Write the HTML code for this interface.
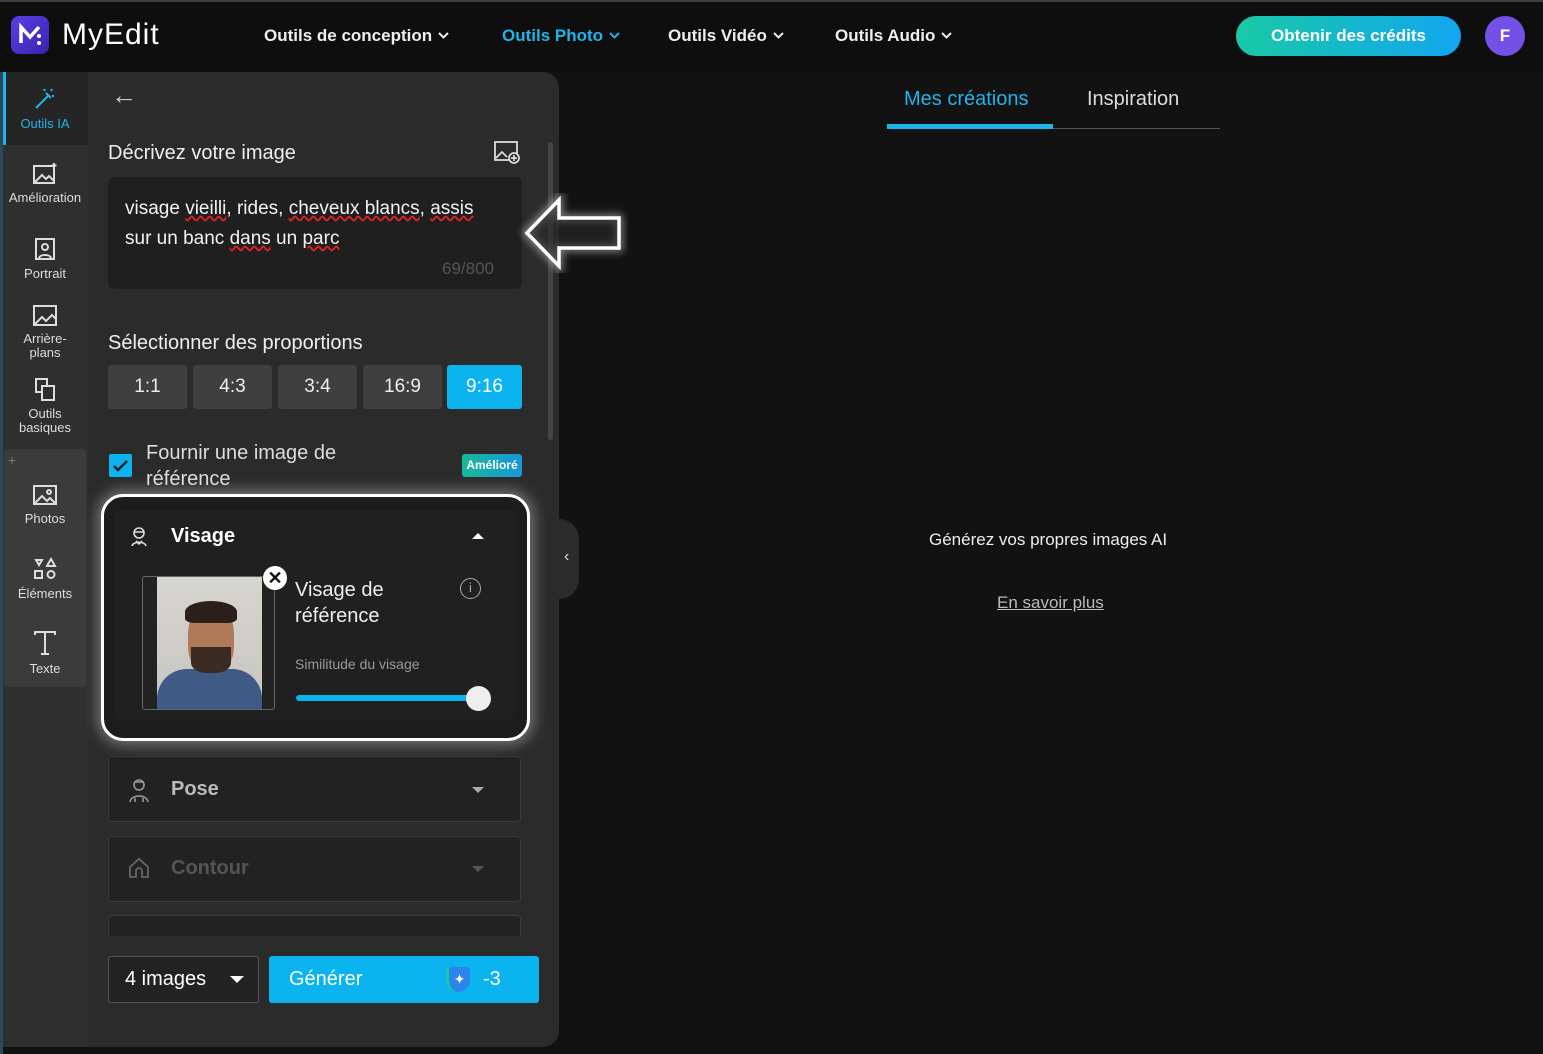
<!DOCTYPE html>
<html><head><meta charset="utf-8">
<style>
*{box-sizing:border-box;margin:0;padding:0}
body{width:1543px;height:1054px;background:#121212;font-family:"Liberation Sans",sans-serif;color:#fff;position:relative;overflow:hidden}
.abs{position:absolute}
.nav{font-size:17px;font-weight:bold;color:#eee;top:26px}
.nav svg{margin-left:6px;vertical-align:2px}
.side{position:absolute;left:2px;width:86px;text-align:center;font-size:13px;color:#ddd}
.side svg{display:block;margin:0 auto 4px}
.btn{position:absolute;top:365px;height:44px;width:79px;background:#3f3f3f;border-radius:3px;font-size:19px;text-align:center;line-height:44px;color:#eee}
.box{position:absolute;left:108px;width:413px;background:#222;border:1px solid #3a3a3a;border-radius:4px}
</style></head><body>
<!-- header -->
<div class="abs" style="left:0;top:0;width:1543px;height:72px;background:#0e0e0e;border-top:2px solid #3a4046"></div>
<div class="abs" style="left:11px;top:16px;width:38px;height:38px;border-radius:8px;background:linear-gradient(135deg,#5a3ee8,#3a22b0)">
<svg width="38" height="38" viewBox="0 0 38 38"><path d="M10 27V11l9 10 9-10" stroke="#fff" stroke-width="3.5" fill="none"/><circle cx="28" cy="20" r="2" fill="#fff"/><circle cx="28" cy="27" r="2" fill="#fff"/></svg></div>
<div class="abs" style="left:62px;top:18px;font-size:30px;color:#fff;letter-spacing:1px">MyEdit</div>
<div class="abs nav" style="left:264px">Outils de conception<svg width="11" height="7"><path d="M1 1l4.5 4.5L10 1" stroke="#eee" stroke-width="2" fill="none"/></svg></div>
<div class="abs nav" style="left:502px;color:#1fb5ea">Outils Photo<svg width="11" height="7"><path d="M1 1l4.5 4.5L10 1" stroke="#1fb5ea" stroke-width="2" fill="none"/></svg></div>
<div class="abs nav" style="left:668px">Outils Vidéo<svg width="11" height="7"><path d="M1 1l4.5 4.5L10 1" stroke="#eee" stroke-width="2" fill="none"/></svg></div>
<div class="abs nav" style="left:835px">Outils Audio<svg width="11" height="7"><path d="M1 1l4.5 4.5L10 1" stroke="#eee" stroke-width="2" fill="none"/></svg></div>
<div class="abs" style="left:1236px;top:16px;width:225px;height:40px;border-radius:20px;background:linear-gradient(90deg,#19c9a6,#12a6f0);font-size:17px;font-weight:bold;text-align:center;line-height:40px">Obtenir des crédits</div>
<div class="abs" style="left:1485px;top:16px;width:40px;height:40px;border-radius:50%;background:#7450e6;text-align:center;line-height:40px;font-size:17px;font-weight:bold">F</div>

<!-- sidebar -->
<div class="abs" style="left:0;top:72px;width:88px;height:975px;background:#2f2f2f"></div>
<div class="abs" style="left:0;top:72px;width:3px;height:982px;background:#2a4a5a"></div>
<div class="abs" style="left:3px;top:72px;width:86px;height:73px;background:#252525"></div>
<div class="abs" style="left:3px;top:72px;width:3px;height:73px;background:#1fb5ea"></div>
<div class="abs" style="left:4px;top:449px;width:82px;height:238px;background:#3b3b3b;border-radius:4px"></div>
<div class="abs" style="left:8px;top:452px;color:#777;font-size:14px">+</div>
<div class="side" style="top:86px;color:#1fb5ea"><svg width="26" height="26" viewBox="0 0 26 26" fill="none" stroke="#1fb5ea" stroke-width="2"><path d="M4 22L17 9M14 7l5 5M12 3l1 2M20 3l-1 2M22 10l-2 0"/></svg>Outils IA</div>
<div class="side" style="top:162px"><svg width="26" height="24" viewBox="0 0 26 24" fill="none" stroke="#ddd" stroke-width="2"><rect x="2" y="4" width="20" height="17"/><path d="M3 20l7-7 4 4 3-3 5 5"/><path d="M22 1v5M19.5 3.5h5"/></svg>Amélioration</div>
<div class="side" style="top:236px"><svg width="24" height="26" viewBox="0 0 24 26" fill="none" stroke="#ddd" stroke-width="2"><rect x="3" y="3" width="18" height="20"/><circle cx="12" cy="11" r="3"/><path d="M6 22c1-4 11-4 12 0"/></svg>Portrait</div>
<div class="side" style="top:304px;line-height:14px"><svg width="26" height="24" viewBox="0 0 26 24" fill="none" stroke="#ddd" stroke-width="2"><rect x="2" y="2" width="22" height="19"/><path d="M3 20l7-7 4 4 6-6 4 4"/></svg>Arrière-<br>plans</div>
<div class="side" style="top:377px;line-height:14px"><svg width="24" height="26" viewBox="0 0 24 26" fill="none" stroke="#ddd" stroke-width="2"><rect x="3" y="2" width="11" height="13"/><rect x="9" y="9" width="12" height="14" fill="#2f2f2f"/></svg>Outils<br>basiques</div>
<div class="side" style="top:483px"><svg width="26" height="24" viewBox="0 0 26 24" fill="none" stroke="#ddd" stroke-width="2"><rect x="2" y="3" width="22" height="18"/><path d="M3 20l7-7 5 5 3-3 5 5"/><circle cx="17" cy="9" r="2"/></svg>Photos</div>
<div class="side" style="top:556px"><svg width="26" height="26" viewBox="0 0 26 26" fill="none" stroke="#ddd" stroke-width="2"><path d="M4 4h6l-3 5z"/><path d="M19 3l4 7h-8z"/><rect x="3" y="15" width="7" height="7"/><circle cx="19" cy="18.5" r="3.5"/></svg>Éléments</div>
<div class="side" style="top:629px"><svg width="26" height="28" viewBox="0 0 26 28" fill="none" stroke="#ddd" stroke-width="2"><path d="M3 6V3h20v3M13 3v22M9 25h8"/></svg>Texte</div>

<!-- panel -->
<div class="abs" style="left:88px;top:72px;width:471px;height:975px;background:#2b2b2b;border-radius:0 16px 16px 0"></div>
<div class="abs" style="left:548px;top:142px;width:5px;height:298px;background:#444;border-radius:3px"></div>
<div class="abs" style="left:111px;top:80px;font-size:26px;color:#ccc">←</div>
<div class="abs" style="left:108px;top:142px;font-size:20px;color:#eee">Décrivez votre image</div>
<svg class="abs" style="left:494px;top:141px" width="28" height="24" viewBox="0 0 28 24" fill="none" stroke="#ddd" stroke-width="1.8"><rect x="1" y="1" width="22" height="18"/><path d="M2 17l6-6 5 5"/><circle cx="20" cy="17" r="5" fill="#2b2b2b"/><path d="M20 14v6M17 17h6"/></svg>
<div class="abs" style="left:108px;top:177px;width:414px;height:112px;background:#1f1f1f;border-radius:6px"></div>
<div class="abs" style="left:125px;top:194px;font-size:19px;line-height:30px;color:#f2f2f2;width:390px">visage <u style="text-decoration:underline wavy #d22">vieilli</u>, rides, <u style="text-decoration:underline wavy #d22">cheveux blancs</u>, <u style="text-decoration:underline wavy #d22">assis</u><br>sur un banc <u style="text-decoration:underline wavy #d22">dans</u> un <u style="text-decoration:underline wavy #d22">parc</u></div>
<div class="abs" style="left:442px;top:259px;font-size:17px;color:#555">69/800</div>
<div class="abs" style="left:108px;top:332px;font-size:20px;color:#eee">Sélectionner des proportions</div>
<div class="btn" style="left:108px">1:1</div>
<div class="btn" style="left:193px">4:3</div>
<div class="btn" style="left:278px">3:4</div>
<div class="btn" style="left:363px">16:9</div>
<div class="btn" style="left:447px;width:75px;background:#0bb4ee;color:#fff">9:16</div>
<div class="abs" style="left:109px;top:454px;width:23px;height:23px;background:#0bb4ee;border-radius:2px"><svg width="23" height="23"><path d="M5 12l4 4 9-9" stroke="#222" stroke-width="2.5" fill="none"/></svg></div>
<div class="abs" style="left:146px;top:440px;font-size:20px;line-height:26px;color:#ddd">Fournir une image de<br>référence</div>
<div class="abs" style="left:462px;top:454px;width:60px;height:23px;border-radius:3px;background:linear-gradient(90deg,#19b89a,#1896d8);font-size:12px;font-weight:bold;text-align:center;line-height:23px">Amélioré</div>

<!-- visage card -->
<div class="abs" style="left:101px;top:494px;width:429px;height:247px;border:3px solid #fff;border-radius:22px;background:#1c1c1c;box-shadow:0 0 14px 4px rgba(255,255,255,.35)"></div>
<div class="abs" style="left:114px;top:510px;width:402px;height:210px;background:#202020;border-radius:6px"></div>
<svg class="abs" style="left:129px;top:525px" width="20" height="22" viewBox="0 0 20 22" fill="none" stroke="#ddd" stroke-width="1.6"><circle cx="10" cy="8" r="5"/><path d="M5 7h10M3 21c1-5 13-5 14 0M7 16l3 3 3-3"/></svg>
<div class="abs" style="left:171px;top:525px;font-size:20px;font-weight:bold">Visage</div>
<div class="abs" style="left:472px;top:533px;width:0;height:0;border-left:6px solid transparent;border-right:6px solid transparent;border-bottom:6px solid #fff"></div>
<div class="abs" style="left:142px;top:576px;width:133px;height:134px;border:1px solid #666;border-radius:3px;background:#222;overflow:hidden">
<div class="abs" style="left:14px;top:0;width:105px;height:134px;background:linear-gradient(#d7d5d0,#c7c5c0)"></div>
<div class="abs" style="left:14px;top:92px;width:105px;height:42px;background:#3f5b85;border-radius:30px 30px 0 0"></div>
<div class="abs" style="left:45px;top:30px;width:46px;height:66px;background:#b07a58;border-radius:40%"></div>
<div class="abs" style="left:42px;top:24px;width:52px;height:22px;background:#2a1f1a;border-radius:50% 50% 20% 20%"></div>
<div class="abs" style="left:48px;top:70px;width:40px;height:26px;background:#3a2a22;border-radius:0 0 40% 40%"></div>
</div>
<div class="abs" style="left:263px;top:566px;width:24px;height:24px;border-radius:50%;background:#fff;color:#111;text-align:center;line-height:24px;font-size:18px;font-weight:bold">✕</div>
<div class="abs" style="left:295px;top:577px;font-size:20px;line-height:26px;color:#eee">Visage de<br>référence</div>
<div class="abs" style="left:460px;top:578px;width:21px;height:21px;border:1.5px solid #aaa;border-radius:50%;color:#aaa;font-size:13px;text-align:center;line-height:18px">i</div>
<div class="abs" style="left:295px;top:656px;font-size:14px;color:#999">Similitude du visage</div>
<div class="abs" style="left:296px;top:695px;width:182px;height:6px;border-radius:3px;background:#0bb4ee"></div>
<div class="abs" style="left:466px;top:686px;width:25px;height:25px;border-radius:50%;background:#eee"></div>

<!-- pose / contour -->
<div class="box" style="top:756px;height:66px"></div>
<svg class="abs" style="left:128px;top:777px" width="22" height="26" viewBox="0 0 22 26" fill="none" stroke="#999" stroke-width="1.6"><circle cx="11" cy="8" r="5"/><path d="M6 5h10M2 25c1-8 17-8 18 0M7 21v4M15 21v4"/></svg>
<div class="abs" style="left:171px;top:778px;font-size:20px;font-weight:bold;color:#bbb">Pose</div>
<div class="abs" style="left:472px;top:787px;border-left:6px solid transparent;border-right:6px solid transparent;border-top:6px solid #aaa"></div>
<div class="box" style="top:836px;height:66px"></div>
<svg class="abs" style="left:128px;top:857px" width="22" height="22" viewBox="0 0 22 22" fill="none" stroke="#666" stroke-width="1.8"><path d="M2 10l9-8 9 8v10H14v-6a3 3 0 0 0-6 0v6H2z"/></svg>
<div class="abs" style="left:171px;top:857px;font-size:20px;font-weight:bold;color:#555">Contour</div>
<div class="abs" style="left:472px;top:866px;border-left:6px solid transparent;border-right:6px solid transparent;border-top:6px solid #555"></div>
<div class="box" style="top:915px;height:30px;border-bottom:none;border-radius:4px 4px 0 0"></div>
<div class="abs" style="left:100px;top:936px;width:440px;height:12px;background:#2b2b2b"></div>

<!-- bottom -->
<div class="abs" style="left:108px;top:956px;width:151px;height:47px;border:1px solid #555;border-radius:3px;background:#222"></div>
<div class="abs" style="left:125px;top:968px;font-size:20px">4 images</div>
<div class="abs" style="left:230px;top:976px;border-left:7px solid transparent;border-right:7px solid transparent;border-top:7px solid #fff"></div>
<div class="abs" style="left:269px;top:956px;width:270px;height:47px;background:#0bb4ee;border-radius:3px"></div>
<div class="abs" style="left:289px;top:968px;font-size:20px">Générer</div>
<div class="abs" style="left:446px;top:967px;width:24px;height:25px;border-radius:4px 4px 12px 12px;background:#2a86e8;border-left:3px solid #19c9a6;color:#fff;text-align:center;font-size:14px;line-height:25px">✦</div>
<div class="abs" style="left:483px;top:968px;font-size:20px">-3</div>

<!-- collapse tab -->
<div class="abs" style="left:559px;top:519px;width:20px;height:80px;background:#2b2b2b;border-radius:0 30px 30px 0"></div>
<div class="abs" style="left:564px;top:548px;color:#ddd;font-size:16px">‹</div>

<!-- right main -->
<div class="abs" style="left:904px;top:88px;font-size:20px;color:#1fb5ea">Mes créations</div>
<div class="abs" style="left:1087px;top:88px;font-size:20px;color:#ddd">Inspiration</div>
<div class="abs" style="left:887px;top:128px;width:333px;height:1px;background:#555"></div>
<div class="abs" style="left:887px;top:124px;width:166px;height:5px;background:#1fb5ea"></div>
<div class="abs" style="left:929px;top:530px;font-size:17px;color:#eee">Générez vos propres images AI</div>
<div class="abs" style="left:997px;top:593px;font-size:17px;color:#bbb;text-decoration:underline">En savoir plus</div>

<!-- annotation arrow -->
<svg class="abs" style="left:515px;top:188px" width="120" height="90" viewBox="0 0 120 90">
<defs><filter id="g"><feGaussianBlur stdDeviation="4"/></filter></defs>
<path d="M12 45L44 12V30H104V60H44V78Z" fill="none" stroke="#fff" stroke-width="8" opacity=".45" filter="url(#g)"/>
<path d="M12 45L44 12V30H104V60H44V78Z" fill="rgba(40,40,40,.6)" stroke="#fff" stroke-width="3.5"/>
</svg>
</body></html>
